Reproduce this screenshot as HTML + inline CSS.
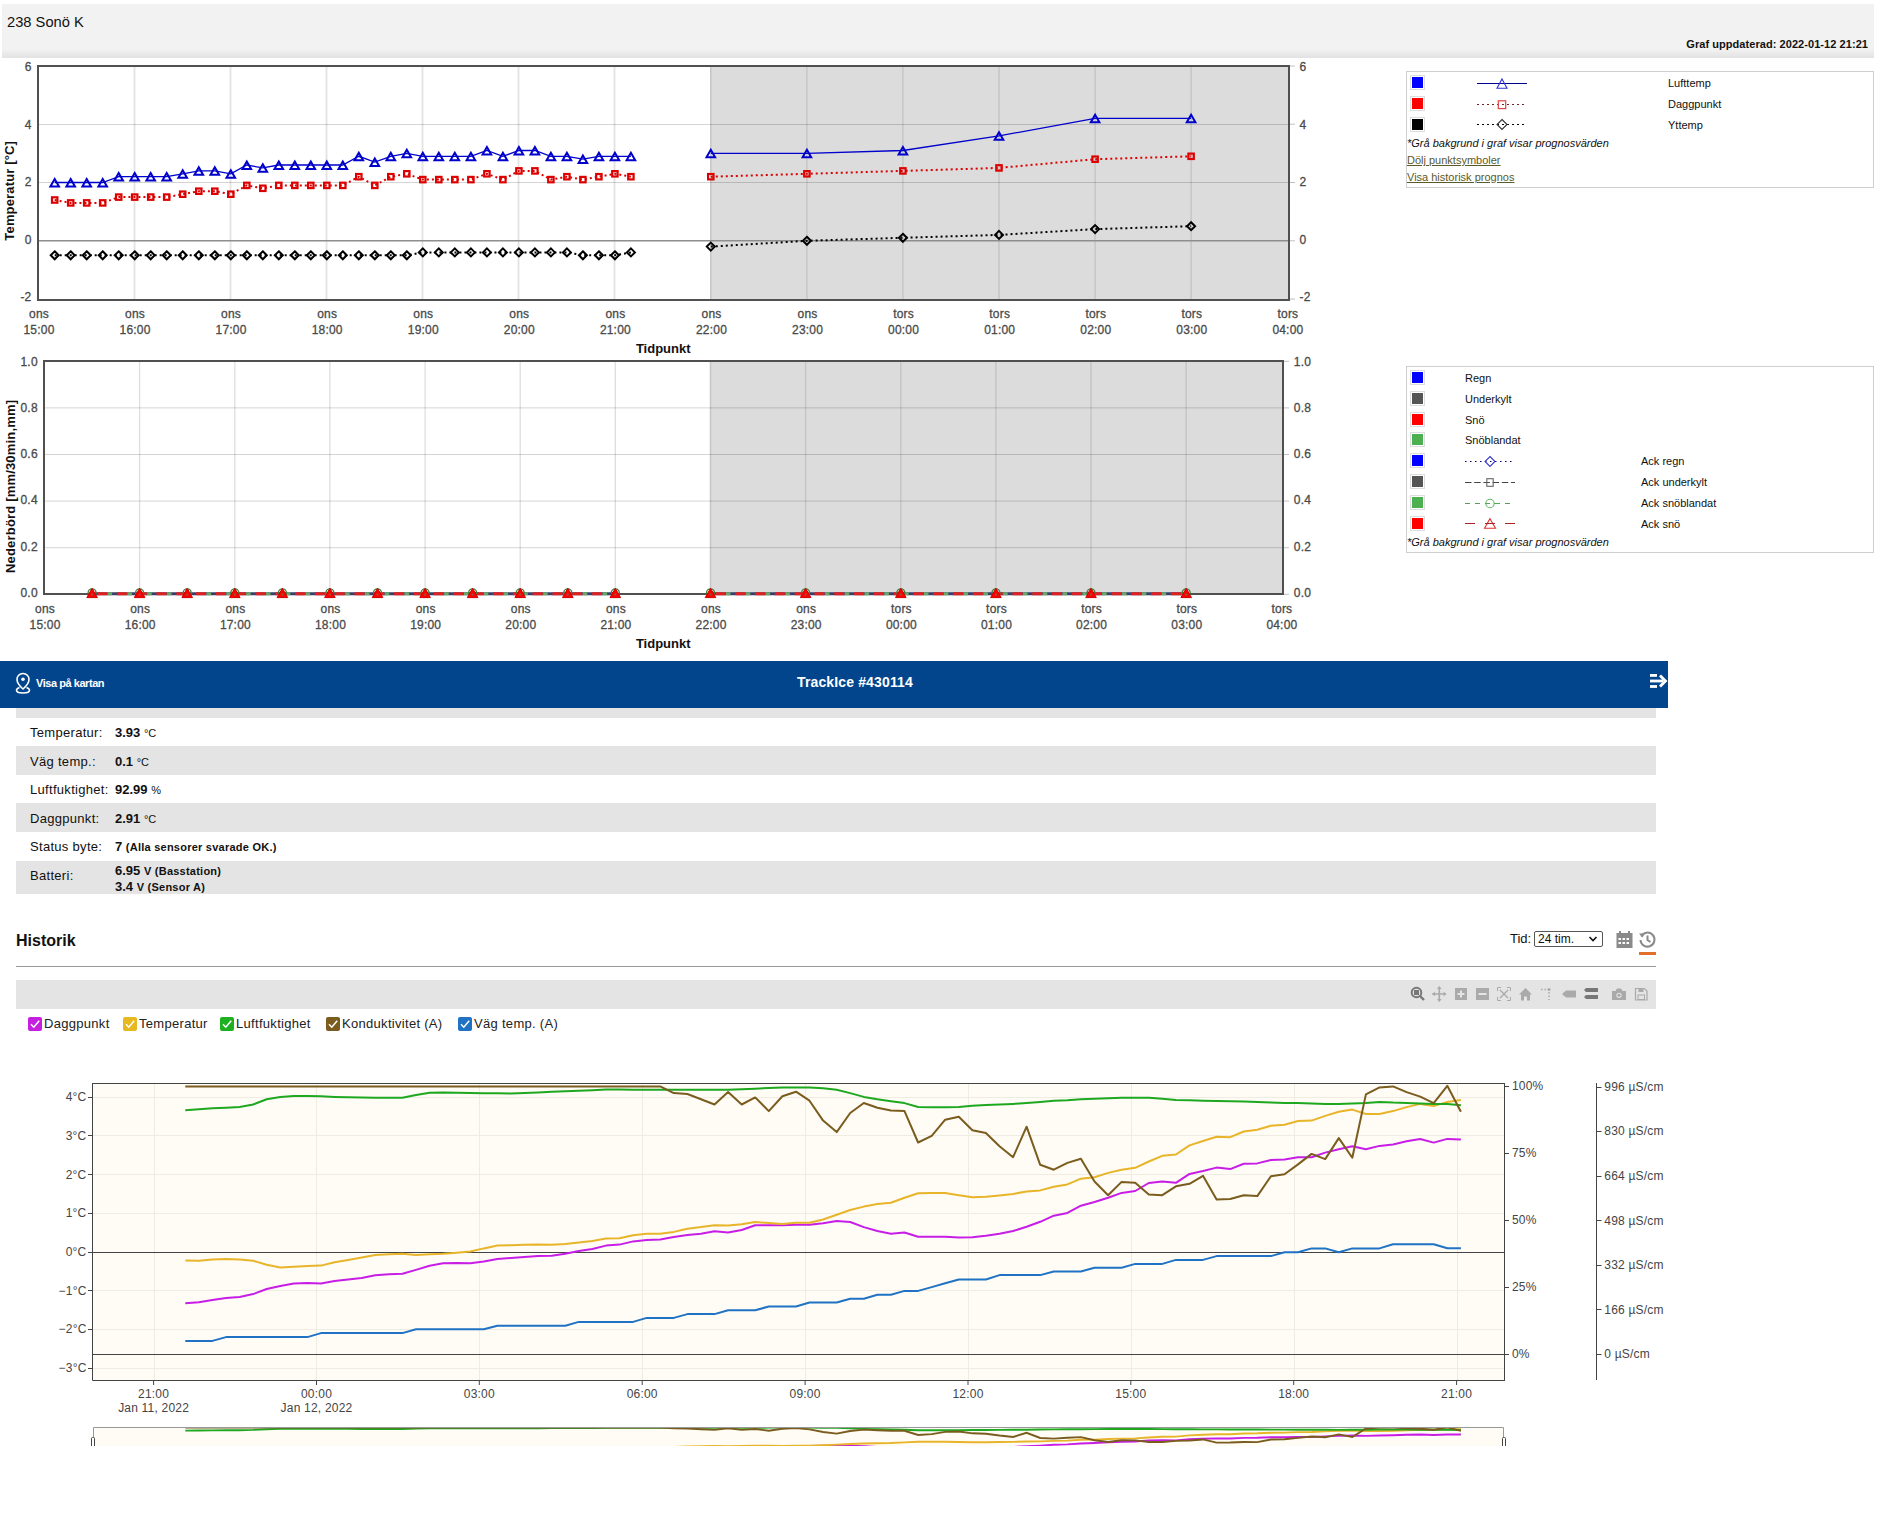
<!DOCTYPE html><html><head><meta charset="utf-8"><title>238 Sonö K</title><style>
*{margin:0;padding:0;box-sizing:border-box}
html,body{width:1882px;height:1525px;overflow:hidden;background:#fff;font-family:"Liberation Sans", sans-serif;}
.abs{position:absolute}
svg text{font-family:"Liberation Sans", sans-serif}
.ax{font-size:12px;fill:#4a4a4a;stroke:#4a4a4a;stroke-width:0.3px;letter-spacing:0.2px}
.ttl{font-size:13px;font-weight:bold;fill:#111}
.pl{font-size:12px;fill:#444;letter-spacing:0.2px}

.lg{font-size:11px;color:#111;white-space:nowrap}
.note{font-size:11px;font-style:italic;color:#111;white-space:nowrap}
.lnk{font-size:11px;color:#5a5a2a;text-decoration:underline;white-space:nowrap}
.row{position:absolute;left:16px;width:1640px}
.gr{background:#e4e4e4}
.lab{position:absolute;left:14px;font-size:13px;color:#111;white-space:nowrap;letter-spacing:0.3px}
.val{position:absolute;left:99px;font-size:13px;font-weight:bold;color:#111;white-space:nowrap}
.unit{font-size:11px;font-weight:normal}
.ub{font-size:11px;font-weight:bold;letter-spacing:0.24px}
.cb{position:absolute;top:1017px;width:14px;height:14px;border-radius:2px}
.cbl{position:absolute;top:1015.5px;font-size:13px;color:#222;white-space:nowrap;letter-spacing:0.3px}
</style></head><body>
<div class="abs" style="left:2px;top:4px;width:1872px;height:54px;background:linear-gradient(to bottom,#f2f2f2 0,#f2f2f2 45px,#e2e2e2 54px)"></div>
<div class="abs" style="left:7px;top:13px;font-size:14.7px;color:#111;line-height:18px;white-space:nowrap">238 Sonö K</div>
<div class="abs" style="right:14px;top:37.8px;font-size:11px;font-weight:bold;color:#111;line-height:13px;letter-spacing:0.06px;white-space:nowrap">Graf uppdaterad: 2022-01-12 21:21</div>
<svg class="abs" style="left:0;top:0" width="1882" height="660" viewBox="0 0 1882 660">
<rect x="710.8" y="66" width="578.2" height="234" fill="#dcdcdc"/>
<rect x="133" y="67" width="1" height="232" fill="#f3f3f3"/>
<rect x="134" y="67" width="1" height="232" fill="#e3e3e3"/>
<rect x="135" y="67" width="1" height="232" fill="#f2f2f2"/>
<rect x="229" y="67" width="1" height="232" fill="#f3f3f3"/>
<rect x="230" y="67" width="1" height="232" fill="#e3e3e3"/>
<rect x="231" y="67" width="1" height="232" fill="#f2f2f2"/>
<rect x="325" y="67" width="1" height="232" fill="#f3f3f3"/>
<rect x="326" y="67" width="1" height="232" fill="#e3e3e3"/>
<rect x="327" y="67" width="1" height="232" fill="#f2f2f2"/>
<rect x="421" y="67" width="1" height="232" fill="#f3f3f3"/>
<rect x="422" y="67" width="1" height="232" fill="#e3e3e3"/>
<rect x="423" y="67" width="1" height="232" fill="#f2f2f2"/>
<rect x="517" y="67" width="1" height="232" fill="#f3f3f3"/>
<rect x="518" y="67" width="1" height="232" fill="#e3e3e3"/>
<rect x="519" y="67" width="1" height="232" fill="#f2f2f2"/>
<rect x="613" y="67" width="1" height="232" fill="#f3f3f3"/>
<rect x="614" y="67" width="1" height="232" fill="#e3e3e3"/>
<rect x="615" y="67" width="1" height="232" fill="#f2f2f2"/>
<line x1="710.8" y1="67" x2="710.8" y2="299" stroke="#c6c6c6" stroke-width="1.5"/>
<line x1="806.9" y1="67" x2="806.9" y2="299" stroke="#c6c6c6" stroke-width="1.5"/>
<line x1="902.9" y1="67" x2="902.9" y2="299" stroke="#c6c6c6" stroke-width="1.5"/>
<line x1="999.0" y1="67" x2="999.0" y2="299" stroke="#c6c6c6" stroke-width="1.5"/>
<line x1="1095.1" y1="67" x2="1095.1" y2="299" stroke="#c6c6c6" stroke-width="1.5"/>
<line x1="1191.1" y1="67" x2="1191.1" y2="299" stroke="#c6c6c6" stroke-width="1.5"/>
<line x1="38" y1="124.50" x2="1289" y2="124.50" stroke="#000" stroke-opacity="0.17" stroke-width="1"/>
<line x1="38" y1="182.50" x2="1289" y2="182.50" stroke="#000" stroke-opacity="0.17" stroke-width="1"/>
<line x1="38" y1="240.75" x2="1289" y2="240.75" stroke="#8e8e8e" stroke-width="1.6"/>
<rect x="38" y="66" width="1251" height="234" fill="none" stroke="#505050" stroke-width="2"/>
<line x1="1290" y1="66.0" x2="1295" y2="66.0" stroke="#c0c0c0" stroke-width="1"/>
<line x1="1290" y1="124.2" x2="1295" y2="124.2" stroke="#c0c0c0" stroke-width="1"/>
<line x1="1290" y1="182.5" x2="1295" y2="182.5" stroke="#c0c0c0" stroke-width="1"/>
<line x1="1290" y1="240.8" x2="1295" y2="240.8" stroke="#c0c0c0" stroke-width="1"/>
<line x1="1290" y1="299.0" x2="1295" y2="299.0" stroke="#c0c0c0" stroke-width="1"/>
<text x="31.5" y="71.0" text-anchor="end" class="ax">6</text>
<text x="1299.5" y="71.0" class="ax">6</text>
<text x="31.5" y="128.6" text-anchor="end" class="ax">4</text>
<text x="1299.5" y="128.6" class="ax">4</text>
<text x="31.5" y="186.2" text-anchor="end" class="ax">2</text>
<text x="1299.5" y="186.2" class="ax">2</text>
<text x="31.5" y="243.8" text-anchor="end" class="ax">0</text>
<text x="1299.5" y="243.8" class="ax">0</text>
<text x="31.5" y="301.4" text-anchor="end" class="ax">-2</text>
<text x="1299.5" y="301.4" class="ax">-2</text>
<text x="39.0" y="317.8" text-anchor="middle" class="ax">ons</text>
<text x="39.0" y="333.8" text-anchor="middle" class="ax">15:00</text>
<text x="135.1" y="317.8" text-anchor="middle" class="ax">ons</text>
<text x="135.1" y="333.8" text-anchor="middle" class="ax">16:00</text>
<text x="231.1" y="317.8" text-anchor="middle" class="ax">ons</text>
<text x="231.1" y="333.8" text-anchor="middle" class="ax">17:00</text>
<text x="327.2" y="317.8" text-anchor="middle" class="ax">ons</text>
<text x="327.2" y="333.8" text-anchor="middle" class="ax">18:00</text>
<text x="423.3" y="317.8" text-anchor="middle" class="ax">ons</text>
<text x="423.3" y="333.8" text-anchor="middle" class="ax">19:00</text>
<text x="519.3" y="317.8" text-anchor="middle" class="ax">ons</text>
<text x="519.3" y="333.8" text-anchor="middle" class="ax">20:00</text>
<text x="615.4" y="317.8" text-anchor="middle" class="ax">ons</text>
<text x="615.4" y="333.8" text-anchor="middle" class="ax">21:00</text>
<text x="711.5" y="317.8" text-anchor="middle" class="ax">ons</text>
<text x="711.5" y="333.8" text-anchor="middle" class="ax">22:00</text>
<text x="807.6" y="317.8" text-anchor="middle" class="ax">ons</text>
<text x="807.6" y="333.8" text-anchor="middle" class="ax">23:00</text>
<text x="903.6" y="317.8" text-anchor="middle" class="ax">tors</text>
<text x="903.6" y="333.8" text-anchor="middle" class="ax">00:00</text>
<text x="999.7" y="317.8" text-anchor="middle" class="ax">tors</text>
<text x="999.7" y="333.8" text-anchor="middle" class="ax">01:00</text>
<text x="1095.8" y="317.8" text-anchor="middle" class="ax">tors</text>
<text x="1095.8" y="333.8" text-anchor="middle" class="ax">02:00</text>
<text x="1191.8" y="317.8" text-anchor="middle" class="ax">tors</text>
<text x="1191.8" y="333.8" text-anchor="middle" class="ax">03:00</text>
<text x="1287.9" y="317.8" text-anchor="middle" class="ax">tors</text>
<text x="1287.9" y="333.8" text-anchor="middle" class="ax">04:00</text>
<text x="663.2" y="352.9" text-anchor="middle" class="ttl">Tidpunkt</text>
<text transform="translate(14.0,190.8) rotate(-90)" text-anchor="middle" class="ttl" style="letter-spacing:0.15px">Temperatur [°C]</text>
<polyline points="54.7,255.3 70.7,255.3 86.7,255.3 102.7,255.3 118.7,255.3 134.7,255.3 150.7,255.3 166.7,255.3 182.7,255.3 198.8,255.3 214.8,255.3 230.8,255.3 246.8,255.3 262.8,255.3 278.8,255.3 294.8,255.3 310.8,255.3 326.8,255.3 342.8,255.3 358.8,255.3 374.8,255.3 390.8,255.3 406.8,255.3 422.8,252.4 438.8,252.4 454.8,252.4 470.9,252.4 486.9,252.4 502.9,252.4 518.9,252.4 534.9,252.4 550.9,252.4 566.9,252.4 582.9,255.3 598.9,255.3 614.9,255.3 630.9,252.4" fill="none" stroke="#000" stroke-width="2" stroke-dasharray="2,3"/>
<polyline points="54.7,200.0 70.7,202.9 86.7,202.9 102.7,202.9 118.7,197.1 134.7,197.1 150.7,197.1 166.7,197.1 182.7,194.2 198.8,191.2 214.8,191.2 230.8,194.2 246.8,185.4 262.8,188.3 278.8,185.4 294.8,185.4 310.8,185.4 326.8,185.4 342.8,185.4 358.8,176.7 374.8,185.4 390.8,176.7 406.8,173.8 422.8,179.6 438.8,179.6 454.8,179.6 470.9,179.6 486.9,173.8 502.9,179.6 518.9,170.9 534.9,170.9 550.9,179.6 566.9,176.7 582.9,179.6 598.9,176.7 614.9,173.8 630.9,176.7" fill="none" stroke="#dd0000" stroke-width="2" stroke-dasharray="2,3"/>
<polyline points="54.7,182.5 70.7,182.5 86.7,182.5 102.7,182.5 118.7,176.7 134.7,176.7 150.7,176.7 166.7,176.7 182.7,173.8 198.8,170.9 214.8,170.9 230.8,173.8 246.8,165.0 262.8,167.9 278.8,165.0 294.8,165.0 310.8,165.0 326.8,165.0 342.8,165.0 358.8,156.3 374.8,162.1 390.8,156.3 406.8,153.4 422.8,156.3 438.8,156.3 454.8,156.3 470.9,156.3 486.9,150.5 502.9,156.3 518.9,150.5 534.9,150.5 550.9,156.3 566.9,156.3 582.9,159.2 598.9,156.3 614.9,156.3 630.9,156.3" fill="none" stroke="#0000cc" stroke-width="1.3"/>
<path d="M54.7,251.3L58.7,255.3L54.7,259.3L50.7,255.3Z" fill="none" stroke="#000" stroke-width="2"/>
<path d="M70.7,251.3L74.7,255.3L70.7,259.3L66.7,255.3Z" fill="none" stroke="#000" stroke-width="2"/>
<path d="M86.7,251.3L90.7,255.3L86.7,259.3L82.7,255.3Z" fill="none" stroke="#000" stroke-width="2"/>
<path d="M102.7,251.3L106.7,255.3L102.7,259.3L98.7,255.3Z" fill="none" stroke="#000" stroke-width="2"/>
<path d="M118.7,251.3L122.7,255.3L118.7,259.3L114.7,255.3Z" fill="none" stroke="#000" stroke-width="2"/>
<path d="M134.7,251.3L138.7,255.3L134.7,259.3L130.7,255.3Z" fill="none" stroke="#000" stroke-width="2"/>
<path d="M150.7,251.3L154.7,255.3L150.7,259.3L146.7,255.3Z" fill="none" stroke="#000" stroke-width="2"/>
<path d="M166.7,251.3L170.7,255.3L166.7,259.3L162.7,255.3Z" fill="none" stroke="#000" stroke-width="2"/>
<path d="M182.7,251.3L186.7,255.3L182.7,259.3L178.7,255.3Z" fill="none" stroke="#000" stroke-width="2"/>
<path d="M198.8,251.3L202.8,255.3L198.8,259.3L194.8,255.3Z" fill="none" stroke="#000" stroke-width="2"/>
<path d="M214.8,251.3L218.8,255.3L214.8,259.3L210.8,255.3Z" fill="none" stroke="#000" stroke-width="2"/>
<path d="M230.8,251.3L234.8,255.3L230.8,259.3L226.8,255.3Z" fill="none" stroke="#000" stroke-width="2"/>
<path d="M246.8,251.3L250.8,255.3L246.8,259.3L242.8,255.3Z" fill="none" stroke="#000" stroke-width="2"/>
<path d="M262.8,251.3L266.8,255.3L262.8,259.3L258.8,255.3Z" fill="none" stroke="#000" stroke-width="2"/>
<path d="M278.8,251.3L282.8,255.3L278.8,259.3L274.8,255.3Z" fill="none" stroke="#000" stroke-width="2"/>
<path d="M294.8,251.3L298.8,255.3L294.8,259.3L290.8,255.3Z" fill="none" stroke="#000" stroke-width="2"/>
<path d="M310.8,251.3L314.8,255.3L310.8,259.3L306.8,255.3Z" fill="none" stroke="#000" stroke-width="2"/>
<path d="M326.8,251.3L330.8,255.3L326.8,259.3L322.8,255.3Z" fill="none" stroke="#000" stroke-width="2"/>
<path d="M342.8,251.3L346.8,255.3L342.8,259.3L338.8,255.3Z" fill="none" stroke="#000" stroke-width="2"/>
<path d="M358.8,251.3L362.8,255.3L358.8,259.3L354.8,255.3Z" fill="none" stroke="#000" stroke-width="2"/>
<path d="M374.8,251.3L378.8,255.3L374.8,259.3L370.8,255.3Z" fill="none" stroke="#000" stroke-width="2"/>
<path d="M390.8,251.3L394.8,255.3L390.8,259.3L386.8,255.3Z" fill="none" stroke="#000" stroke-width="2"/>
<path d="M406.8,251.3L410.8,255.3L406.8,259.3L402.8,255.3Z" fill="none" stroke="#000" stroke-width="2"/>
<path d="M422.8,248.4L426.8,252.4L422.8,256.4L418.8,252.4Z" fill="none" stroke="#000" stroke-width="2"/>
<path d="M438.8,248.4L442.8,252.4L438.8,256.4L434.8,252.4Z" fill="none" stroke="#000" stroke-width="2"/>
<path d="M454.8,248.4L458.8,252.4L454.8,256.4L450.8,252.4Z" fill="none" stroke="#000" stroke-width="2"/>
<path d="M470.9,248.4L474.9,252.4L470.9,256.4L466.9,252.4Z" fill="none" stroke="#000" stroke-width="2"/>
<path d="M486.9,248.4L490.9,252.4L486.9,256.4L482.9,252.4Z" fill="none" stroke="#000" stroke-width="2"/>
<path d="M502.9,248.4L506.9,252.4L502.9,256.4L498.9,252.4Z" fill="none" stroke="#000" stroke-width="2"/>
<path d="M518.9,248.4L522.9,252.4L518.9,256.4L514.9,252.4Z" fill="none" stroke="#000" stroke-width="2"/>
<path d="M534.9,248.4L538.9,252.4L534.9,256.4L530.9,252.4Z" fill="none" stroke="#000" stroke-width="2"/>
<path d="M550.9,248.4L554.9,252.4L550.9,256.4L546.9,252.4Z" fill="none" stroke="#000" stroke-width="2"/>
<path d="M566.9,248.4L570.9,252.4L566.9,256.4L562.9,252.4Z" fill="none" stroke="#000" stroke-width="2"/>
<path d="M582.9,251.3L586.9,255.3L582.9,259.3L578.9,255.3Z" fill="none" stroke="#000" stroke-width="2"/>
<path d="M598.9,251.3L602.9,255.3L598.9,259.3L594.9,255.3Z" fill="none" stroke="#000" stroke-width="2"/>
<path d="M614.9,251.3L618.9,255.3L614.9,259.3L610.9,255.3Z" fill="none" stroke="#000" stroke-width="2"/>
<path d="M630.9,248.4L634.9,252.4L630.9,256.4L626.9,252.4Z" fill="none" stroke="#000" stroke-width="2"/>
<rect x="52.0" y="197.3" width="5.4" height="5.4" fill="none" stroke="#dd0000" stroke-width="2.2"/>
<rect x="68.0" y="200.2" width="5.4" height="5.4" fill="none" stroke="#dd0000" stroke-width="2.2"/>
<rect x="84.0" y="200.2" width="5.4" height="5.4" fill="none" stroke="#dd0000" stroke-width="2.2"/>
<rect x="100.0" y="200.2" width="5.4" height="5.4" fill="none" stroke="#dd0000" stroke-width="2.2"/>
<rect x="116.0" y="194.4" width="5.4" height="5.4" fill="none" stroke="#dd0000" stroke-width="2.2"/>
<rect x="132.0" y="194.4" width="5.4" height="5.4" fill="none" stroke="#dd0000" stroke-width="2.2"/>
<rect x="148.0" y="194.4" width="5.4" height="5.4" fill="none" stroke="#dd0000" stroke-width="2.2"/>
<rect x="164.0" y="194.4" width="5.4" height="5.4" fill="none" stroke="#dd0000" stroke-width="2.2"/>
<rect x="180.0" y="191.5" width="5.4" height="5.4" fill="none" stroke="#dd0000" stroke-width="2.2"/>
<rect x="196.1" y="188.5" width="5.4" height="5.4" fill="none" stroke="#dd0000" stroke-width="2.2"/>
<rect x="212.1" y="188.5" width="5.4" height="5.4" fill="none" stroke="#dd0000" stroke-width="2.2"/>
<rect x="228.1" y="191.5" width="5.4" height="5.4" fill="none" stroke="#dd0000" stroke-width="2.2"/>
<rect x="244.1" y="182.7" width="5.4" height="5.4" fill="none" stroke="#dd0000" stroke-width="2.2"/>
<rect x="260.1" y="185.6" width="5.4" height="5.4" fill="none" stroke="#dd0000" stroke-width="2.2"/>
<rect x="276.1" y="182.7" width="5.4" height="5.4" fill="none" stroke="#dd0000" stroke-width="2.2"/>
<rect x="292.1" y="182.7" width="5.4" height="5.4" fill="none" stroke="#dd0000" stroke-width="2.2"/>
<rect x="308.1" y="182.7" width="5.4" height="5.4" fill="none" stroke="#dd0000" stroke-width="2.2"/>
<rect x="324.1" y="182.7" width="5.4" height="5.4" fill="none" stroke="#dd0000" stroke-width="2.2"/>
<rect x="340.1" y="182.7" width="5.4" height="5.4" fill="none" stroke="#dd0000" stroke-width="2.2"/>
<rect x="356.1" y="174.0" width="5.4" height="5.4" fill="none" stroke="#dd0000" stroke-width="2.2"/>
<rect x="372.1" y="182.7" width="5.4" height="5.4" fill="none" stroke="#dd0000" stroke-width="2.2"/>
<rect x="388.1" y="174.0" width="5.4" height="5.4" fill="none" stroke="#dd0000" stroke-width="2.2"/>
<rect x="404.1" y="171.1" width="5.4" height="5.4" fill="none" stroke="#dd0000" stroke-width="2.2"/>
<rect x="420.1" y="176.9" width="5.4" height="5.4" fill="none" stroke="#dd0000" stroke-width="2.2"/>
<rect x="436.1" y="176.9" width="5.4" height="5.4" fill="none" stroke="#dd0000" stroke-width="2.2"/>
<rect x="452.1" y="176.9" width="5.4" height="5.4" fill="none" stroke="#dd0000" stroke-width="2.2"/>
<rect x="468.2" y="176.9" width="5.4" height="5.4" fill="none" stroke="#dd0000" stroke-width="2.2"/>
<rect x="484.2" y="171.1" width="5.4" height="5.4" fill="none" stroke="#dd0000" stroke-width="2.2"/>
<rect x="500.2" y="176.9" width="5.4" height="5.4" fill="none" stroke="#dd0000" stroke-width="2.2"/>
<rect x="516.2" y="168.2" width="5.4" height="5.4" fill="none" stroke="#dd0000" stroke-width="2.2"/>
<rect x="532.2" y="168.2" width="5.4" height="5.4" fill="none" stroke="#dd0000" stroke-width="2.2"/>
<rect x="548.2" y="176.9" width="5.4" height="5.4" fill="none" stroke="#dd0000" stroke-width="2.2"/>
<rect x="564.2" y="174.0" width="5.4" height="5.4" fill="none" stroke="#dd0000" stroke-width="2.2"/>
<rect x="580.2" y="176.9" width="5.4" height="5.4" fill="none" stroke="#dd0000" stroke-width="2.2"/>
<rect x="596.2" y="174.0" width="5.4" height="5.4" fill="none" stroke="#dd0000" stroke-width="2.2"/>
<rect x="612.2" y="171.1" width="5.4" height="5.4" fill="none" stroke="#dd0000" stroke-width="2.2"/>
<rect x="628.2" y="174.0" width="5.4" height="5.4" fill="none" stroke="#dd0000" stroke-width="2.2"/>
<path d="M54.7,178.9L59.0,186.4L50.4,186.4Z" fill="none" stroke="#0000cc" stroke-width="2"/>
<path d="M70.7,178.9L75.0,186.4L66.4,186.4Z" fill="none" stroke="#0000cc" stroke-width="2"/>
<path d="M86.7,178.9L91.0,186.4L82.4,186.4Z" fill="none" stroke="#0000cc" stroke-width="2"/>
<path d="M102.7,178.9L107.0,186.4L98.4,186.4Z" fill="none" stroke="#0000cc" stroke-width="2"/>
<path d="M118.7,173.1L123.0,180.6L114.4,180.6Z" fill="none" stroke="#0000cc" stroke-width="2"/>
<path d="M134.7,173.1L139.0,180.6L130.4,180.6Z" fill="none" stroke="#0000cc" stroke-width="2"/>
<path d="M150.7,173.1L155.0,180.6L146.4,180.6Z" fill="none" stroke="#0000cc" stroke-width="2"/>
<path d="M166.7,173.1L171.0,180.6L162.4,180.6Z" fill="none" stroke="#0000cc" stroke-width="2"/>
<path d="M182.7,170.2L187.0,177.7L178.4,177.7Z" fill="none" stroke="#0000cc" stroke-width="2"/>
<path d="M198.8,167.3L203.1,174.8L194.5,174.8Z" fill="none" stroke="#0000cc" stroke-width="2"/>
<path d="M214.8,167.3L219.1,174.8L210.5,174.8Z" fill="none" stroke="#0000cc" stroke-width="2"/>
<path d="M230.8,170.2L235.1,177.7L226.5,177.7Z" fill="none" stroke="#0000cc" stroke-width="2"/>
<path d="M246.8,161.4L251.1,168.9L242.5,168.9Z" fill="none" stroke="#0000cc" stroke-width="2"/>
<path d="M262.8,164.3L267.1,171.8L258.5,171.8Z" fill="none" stroke="#0000cc" stroke-width="2"/>
<path d="M278.8,161.4L283.1,168.9L274.5,168.9Z" fill="none" stroke="#0000cc" stroke-width="2"/>
<path d="M294.8,161.4L299.1,168.9L290.5,168.9Z" fill="none" stroke="#0000cc" stroke-width="2"/>
<path d="M310.8,161.4L315.1,168.9L306.5,168.9Z" fill="none" stroke="#0000cc" stroke-width="2"/>
<path d="M326.8,161.4L331.1,168.9L322.5,168.9Z" fill="none" stroke="#0000cc" stroke-width="2"/>
<path d="M342.8,161.4L347.1,168.9L338.5,168.9Z" fill="none" stroke="#0000cc" stroke-width="2"/>
<path d="M358.8,152.7L363.1,160.2L354.5,160.2Z" fill="none" stroke="#0000cc" stroke-width="2"/>
<path d="M374.8,158.5L379.1,166.0L370.5,166.0Z" fill="none" stroke="#0000cc" stroke-width="2"/>
<path d="M390.8,152.7L395.1,160.2L386.5,160.2Z" fill="none" stroke="#0000cc" stroke-width="2"/>
<path d="M406.8,149.8L411.1,157.3L402.5,157.3Z" fill="none" stroke="#0000cc" stroke-width="2"/>
<path d="M422.8,152.7L427.1,160.2L418.5,160.2Z" fill="none" stroke="#0000cc" stroke-width="2"/>
<path d="M438.8,152.7L443.1,160.2L434.5,160.2Z" fill="none" stroke="#0000cc" stroke-width="2"/>
<path d="M454.8,152.7L459.1,160.2L450.5,160.2Z" fill="none" stroke="#0000cc" stroke-width="2"/>
<path d="M470.9,152.7L475.2,160.2L466.6,160.2Z" fill="none" stroke="#0000cc" stroke-width="2"/>
<path d="M486.9,146.9L491.2,154.4L482.6,154.4Z" fill="none" stroke="#0000cc" stroke-width="2"/>
<path d="M502.9,152.7L507.2,160.2L498.6,160.2Z" fill="none" stroke="#0000cc" stroke-width="2"/>
<path d="M518.9,146.9L523.2,154.4L514.6,154.4Z" fill="none" stroke="#0000cc" stroke-width="2"/>
<path d="M534.9,146.9L539.2,154.4L530.6,154.4Z" fill="none" stroke="#0000cc" stroke-width="2"/>
<path d="M550.9,152.7L555.2,160.2L546.6,160.2Z" fill="none" stroke="#0000cc" stroke-width="2"/>
<path d="M566.9,152.7L571.2,160.2L562.6,160.2Z" fill="none" stroke="#0000cc" stroke-width="2"/>
<path d="M582.9,155.6L587.2,163.1L578.6,163.1Z" fill="none" stroke="#0000cc" stroke-width="2"/>
<path d="M598.9,152.7L603.2,160.2L594.6,160.2Z" fill="none" stroke="#0000cc" stroke-width="2"/>
<path d="M614.9,152.7L619.2,160.2L610.6,160.2Z" fill="none" stroke="#0000cc" stroke-width="2"/>
<path d="M630.9,152.7L635.2,160.2L626.6,160.2Z" fill="none" stroke="#0000cc" stroke-width="2"/>
<polyline points="710.8,246.6 806.9,240.8 902.9,237.8 999.0,234.9 1095.1,229.1 1191.1,226.2" fill="none" stroke="#000" stroke-width="2" stroke-dasharray="2,3"/>
<polyline points="710.8,176.7 806.9,173.8 902.9,170.9 999.0,167.9 1095.1,159.2 1191.1,156.3" fill="none" stroke="#dd0000" stroke-width="2" stroke-dasharray="2,3"/>
<polyline points="710.8,153.4 806.9,153.4 902.9,150.5 999.0,135.9 1095.1,118.4 1191.1,118.4" fill="none" stroke="#0000cc" stroke-width="1.3"/>
<path d="M710.8,242.6L714.8,246.6L710.8,250.6L706.8,246.6Z" fill="none" stroke="#000" stroke-width="2"/>
<path d="M806.9,236.8L810.9,240.8L806.9,244.8L802.9,240.8Z" fill="none" stroke="#000" stroke-width="2"/>
<path d="M902.9,233.8L906.9,237.8L902.9,241.8L898.9,237.8Z" fill="none" stroke="#000" stroke-width="2"/>
<path d="M999.0,230.9L1003.0,234.9L999.0,238.9L995.0,234.9Z" fill="none" stroke="#000" stroke-width="2"/>
<path d="M1095.1,225.1L1099.1,229.1L1095.1,233.1L1091.1,229.1Z" fill="none" stroke="#000" stroke-width="2"/>
<path d="M1191.1,222.2L1195.1,226.2L1191.1,230.2L1187.1,226.2Z" fill="none" stroke="#000" stroke-width="2"/>
<rect x="708.1" y="174.0" width="5.4" height="5.4" fill="none" stroke="#dd0000" stroke-width="2.2"/>
<rect x="804.2" y="171.1" width="5.4" height="5.4" fill="none" stroke="#dd0000" stroke-width="2.2"/>
<rect x="900.2" y="168.2" width="5.4" height="5.4" fill="none" stroke="#dd0000" stroke-width="2.2"/>
<rect x="996.3" y="165.2" width="5.4" height="5.4" fill="none" stroke="#dd0000" stroke-width="2.2"/>
<rect x="1092.4" y="156.5" width="5.4" height="5.4" fill="none" stroke="#dd0000" stroke-width="2.2"/>
<rect x="1188.4" y="153.6" width="5.4" height="5.4" fill="none" stroke="#dd0000" stroke-width="2.2"/>
<path d="M710.8,149.8L715.1,157.3L706.5,157.3Z" fill="none" stroke="#0000cc" stroke-width="2"/>
<path d="M806.9,149.8L811.2,157.3L802.6,157.3Z" fill="none" stroke="#0000cc" stroke-width="2"/>
<path d="M902.9,146.9L907.2,154.4L898.6,154.4Z" fill="none" stroke="#0000cc" stroke-width="2"/>
<path d="M999.0,132.3L1003.3,139.8L994.7,139.8Z" fill="none" stroke="#0000cc" stroke-width="2"/>
<path d="M1095.1,114.8L1099.4,122.3L1090.8,122.3Z" fill="none" stroke="#0000cc" stroke-width="2"/>
<path d="M1191.1,114.8L1195.4,122.3L1186.8,122.3Z" fill="none" stroke="#0000cc" stroke-width="2"/>
<rect x="710.5" y="361" width="572.5" height="233" fill="#dcdcdc"/>
<line x1="139.6" y1="362" x2="139.6" y2="593" stroke="#dedede" stroke-width="1.3"/>
<line x1="234.8" y1="362" x2="234.8" y2="593" stroke="#dedede" stroke-width="1.3"/>
<line x1="329.9" y1="362" x2="329.9" y2="593" stroke="#dedede" stroke-width="1.3"/>
<line x1="425.1" y1="362" x2="425.1" y2="593" stroke="#dedede" stroke-width="1.3"/>
<line x1="520.2" y1="362" x2="520.2" y2="593" stroke="#dedede" stroke-width="1.3"/>
<line x1="615.3" y1="362" x2="615.3" y2="593" stroke="#dedede" stroke-width="1.3"/>
<line x1="710.5" y1="362" x2="710.5" y2="593" stroke="#c6c6c6" stroke-width="1.5"/>
<line x1="805.6" y1="362" x2="805.6" y2="593" stroke="#c6c6c6" stroke-width="1.5"/>
<line x1="900.8" y1="362" x2="900.8" y2="593" stroke="#c6c6c6" stroke-width="1.5"/>
<line x1="995.9" y1="362" x2="995.9" y2="593" stroke="#c6c6c6" stroke-width="1.5"/>
<line x1="1091.0" y1="362" x2="1091.0" y2="593" stroke="#c6c6c6" stroke-width="1.5"/>
<line x1="1186.2" y1="362" x2="1186.2" y2="593" stroke="#c6c6c6" stroke-width="1.5"/>
<line x1="44" y1="547.70" x2="1283" y2="547.70" stroke="#000" stroke-opacity="0.17" stroke-width="1"/>
<line x1="44" y1="501.10" x2="1283" y2="501.10" stroke="#000" stroke-opacity="0.17" stroke-width="1"/>
<line x1="44" y1="454.50" x2="1283" y2="454.50" stroke="#000" stroke-opacity="0.17" stroke-width="1"/>
<line x1="44" y1="407.90" x2="1283" y2="407.90" stroke="#000" stroke-opacity="0.17" stroke-width="1"/>
<rect x="44" y="361" width="1239" height="233" fill="none" stroke="#505050" stroke-width="2"/>
<line x1="1284" y1="361.3" x2="1289" y2="361.3" stroke="#c0c0c0" stroke-width="1"/>
<text x="37.8" y="365.8" text-anchor="end" class="ax">1.0</text>
<text x="1293.8" y="365.8" class="ax">1.0</text>
<line x1="1284" y1="407.9" x2="1289" y2="407.9" stroke="#c0c0c0" stroke-width="1"/>
<text x="37.8" y="412.0" text-anchor="end" class="ax">0.8</text>
<text x="1293.8" y="412.0" class="ax">0.8</text>
<line x1="1284" y1="454.5" x2="1289" y2="454.5" stroke="#c0c0c0" stroke-width="1"/>
<text x="37.8" y="458.2" text-anchor="end" class="ax">0.6</text>
<text x="1293.8" y="458.2" class="ax">0.6</text>
<line x1="1284" y1="501.1" x2="1289" y2="501.1" stroke="#c0c0c0" stroke-width="1"/>
<text x="37.8" y="504.4" text-anchor="end" class="ax">0.4</text>
<text x="1293.8" y="504.4" class="ax">0.4</text>
<line x1="1284" y1="547.7" x2="1289" y2="547.7" stroke="#c0c0c0" stroke-width="1"/>
<text x="37.8" y="550.6" text-anchor="end" class="ax">0.2</text>
<text x="1293.8" y="550.6" class="ax">0.2</text>
<line x1="1284" y1="594.3" x2="1289" y2="594.3" stroke="#c0c0c0" stroke-width="1"/>
<text x="37.8" y="596.8" text-anchor="end" class="ax">0.0</text>
<text x="1293.8" y="596.8" class="ax">0.0</text>
<text x="45.1" y="612.8" text-anchor="middle" class="ax">ons</text>
<text x="45.1" y="628.7" text-anchor="middle" class="ax">15:00</text>
<text x="140.2" y="612.8" text-anchor="middle" class="ax">ons</text>
<text x="140.2" y="628.7" text-anchor="middle" class="ax">16:00</text>
<text x="235.4" y="612.8" text-anchor="middle" class="ax">ons</text>
<text x="235.4" y="628.7" text-anchor="middle" class="ax">17:00</text>
<text x="330.5" y="612.8" text-anchor="middle" class="ax">ons</text>
<text x="330.5" y="628.7" text-anchor="middle" class="ax">18:00</text>
<text x="425.7" y="612.8" text-anchor="middle" class="ax">ons</text>
<text x="425.7" y="628.7" text-anchor="middle" class="ax">19:00</text>
<text x="520.8" y="612.8" text-anchor="middle" class="ax">ons</text>
<text x="520.8" y="628.7" text-anchor="middle" class="ax">20:00</text>
<text x="615.9" y="612.8" text-anchor="middle" class="ax">ons</text>
<text x="615.9" y="628.7" text-anchor="middle" class="ax">21:00</text>
<text x="711.1" y="612.8" text-anchor="middle" class="ax">ons</text>
<text x="711.1" y="628.7" text-anchor="middle" class="ax">22:00</text>
<text x="806.2" y="612.8" text-anchor="middle" class="ax">ons</text>
<text x="806.2" y="628.7" text-anchor="middle" class="ax">23:00</text>
<text x="901.4" y="612.8" text-anchor="middle" class="ax">tors</text>
<text x="901.4" y="628.7" text-anchor="middle" class="ax">00:00</text>
<text x="996.5" y="612.8" text-anchor="middle" class="ax">tors</text>
<text x="996.5" y="628.7" text-anchor="middle" class="ax">01:00</text>
<text x="1091.6" y="612.8" text-anchor="middle" class="ax">tors</text>
<text x="1091.6" y="628.7" text-anchor="middle" class="ax">02:00</text>
<text x="1186.8" y="612.8" text-anchor="middle" class="ax">tors</text>
<text x="1186.8" y="628.7" text-anchor="middle" class="ax">03:00</text>
<text x="1281.9" y="612.8" text-anchor="middle" class="ax">tors</text>
<text x="1281.9" y="628.7" text-anchor="middle" class="ax">04:00</text>
<text x="663.2" y="647.7" text-anchor="middle" class="ttl">Tidpunkt</text>
<text transform="translate(14.6,486.4) rotate(-90)" text-anchor="middle" class="ttl" style="letter-spacing:0.18px">Nederbörd [mm/30min,mm]</text>
<line x1="92.1" y1="593.8" x2="615.3" y2="593.8" stroke="#3a3f6a" stroke-width="3"/>
<line x1="97.1" y1="593.8" x2="615.3" y2="593.8" stroke="#e02020" stroke-width="3" stroke-dasharray="10,9.8"/>
<line x1="97.1" y1="593.8" x2="615.3" y2="593.8" stroke="#6aa86a" stroke-width="3" stroke-dasharray="4.5,15.3" stroke-dashoffset="-10.5"/>
<line x1="710.5" y1="593.8" x2="1186.2" y2="593.8" stroke="#3a3f6a" stroke-width="3"/>
<line x1="715.5" y1="593.8" x2="1186.2" y2="593.8" stroke="#e02020" stroke-width="3" stroke-dasharray="10,9.8"/>
<line x1="715.5" y1="593.8" x2="1186.2" y2="593.8" stroke="#6aa86a" stroke-width="3" stroke-dasharray="4.5,15.3" stroke-dashoffset="-10.5"/>
<circle cx="92.1" cy="592.8" r="4" fill="none" stroke="#3f7f3f" stroke-width="1.3"/>
<path d="M92.1,588.3L97.4,597.6L86.8,597.6Z" fill="#ff0000" stroke="#d00000" stroke-width="1"/>
<circle cx="92.1" cy="594.6" r="1.1" fill="#8a5a3a"/>
<circle cx="139.6" cy="592.8" r="4" fill="none" stroke="#3f7f3f" stroke-width="1.3"/>
<path d="M139.6,588.3L144.9,597.6L134.3,597.6Z" fill="#ff0000" stroke="#d00000" stroke-width="1"/>
<circle cx="139.6" cy="594.6" r="1.1" fill="#8a5a3a"/>
<circle cx="187.2" cy="592.8" r="4" fill="none" stroke="#3f7f3f" stroke-width="1.3"/>
<path d="M187.2,588.3L192.5,597.6L181.9,597.6Z" fill="#ff0000" stroke="#d00000" stroke-width="1"/>
<circle cx="187.2" cy="594.6" r="1.1" fill="#8a5a3a"/>
<circle cx="234.8" cy="592.8" r="4" fill="none" stroke="#3f7f3f" stroke-width="1.3"/>
<path d="M234.8,588.3L240.1,597.6L229.5,597.6Z" fill="#ff0000" stroke="#d00000" stroke-width="1"/>
<circle cx="234.8" cy="594.6" r="1.1" fill="#8a5a3a"/>
<circle cx="282.4" cy="592.8" r="4" fill="none" stroke="#3f7f3f" stroke-width="1.3"/>
<path d="M282.4,588.3L287.7,597.6L277.1,597.6Z" fill="#ff0000" stroke="#d00000" stroke-width="1"/>
<circle cx="282.4" cy="594.6" r="1.1" fill="#8a5a3a"/>
<circle cx="329.9" cy="592.8" r="4" fill="none" stroke="#3f7f3f" stroke-width="1.3"/>
<path d="M329.9,588.3L335.2,597.6L324.6,597.6Z" fill="#ff0000" stroke="#d00000" stroke-width="1"/>
<circle cx="329.9" cy="594.6" r="1.1" fill="#8a5a3a"/>
<circle cx="377.5" cy="592.8" r="4" fill="none" stroke="#3f7f3f" stroke-width="1.3"/>
<path d="M377.5,588.3L382.8,597.6L372.2,597.6Z" fill="#ff0000" stroke="#d00000" stroke-width="1"/>
<circle cx="377.5" cy="594.6" r="1.1" fill="#8a5a3a"/>
<circle cx="425.1" cy="592.8" r="4" fill="none" stroke="#3f7f3f" stroke-width="1.3"/>
<path d="M425.1,588.3L430.4,597.6L419.8,597.6Z" fill="#ff0000" stroke="#d00000" stroke-width="1"/>
<circle cx="425.1" cy="594.6" r="1.1" fill="#8a5a3a"/>
<circle cx="472.6" cy="592.8" r="4" fill="none" stroke="#3f7f3f" stroke-width="1.3"/>
<path d="M472.6,588.3L477.9,597.6L467.3,597.6Z" fill="#ff0000" stroke="#d00000" stroke-width="1"/>
<circle cx="472.6" cy="594.6" r="1.1" fill="#8a5a3a"/>
<circle cx="520.2" cy="592.8" r="4" fill="none" stroke="#3f7f3f" stroke-width="1.3"/>
<path d="M520.2,588.3L525.5,597.6L514.9,597.6Z" fill="#ff0000" stroke="#d00000" stroke-width="1"/>
<circle cx="520.2" cy="594.6" r="1.1" fill="#8a5a3a"/>
<circle cx="567.8" cy="592.8" r="4" fill="none" stroke="#3f7f3f" stroke-width="1.3"/>
<path d="M567.8,588.3L573.1,597.6L562.5,597.6Z" fill="#ff0000" stroke="#d00000" stroke-width="1"/>
<circle cx="567.8" cy="594.6" r="1.1" fill="#8a5a3a"/>
<circle cx="615.3" cy="592.8" r="4" fill="none" stroke="#3f7f3f" stroke-width="1.3"/>
<path d="M615.3,588.3L620.6,597.6L610.0,597.6Z" fill="#ff0000" stroke="#d00000" stroke-width="1"/>
<circle cx="615.3" cy="594.6" r="1.1" fill="#8a5a3a"/>
<circle cx="710.5" cy="592.8" r="4" fill="none" stroke="#3f7f3f" stroke-width="1.3"/>
<path d="M710.5,588.3L715.8,597.6L705.2,597.6Z" fill="#ff0000" stroke="#d00000" stroke-width="1"/>
<circle cx="710.5" cy="594.6" r="1.1" fill="#8a5a3a"/>
<circle cx="805.6" cy="592.8" r="4" fill="none" stroke="#3f7f3f" stroke-width="1.3"/>
<path d="M805.6,588.3L810.9,597.6L800.3,597.6Z" fill="#ff0000" stroke="#d00000" stroke-width="1"/>
<circle cx="805.6" cy="594.6" r="1.1" fill="#8a5a3a"/>
<circle cx="900.8" cy="592.8" r="4" fill="none" stroke="#3f7f3f" stroke-width="1.3"/>
<path d="M900.8,588.3L906.1,597.6L895.5,597.6Z" fill="#ff0000" stroke="#d00000" stroke-width="1"/>
<circle cx="900.8" cy="594.6" r="1.1" fill="#8a5a3a"/>
<circle cx="995.9" cy="592.8" r="4" fill="none" stroke="#3f7f3f" stroke-width="1.3"/>
<path d="M995.9,588.3L1001.2,597.6L990.6,597.6Z" fill="#ff0000" stroke="#d00000" stroke-width="1"/>
<circle cx="995.9" cy="594.6" r="1.1" fill="#8a5a3a"/>
<circle cx="1091.0" cy="592.8" r="4" fill="none" stroke="#3f7f3f" stroke-width="1.3"/>
<path d="M1091.0,588.3L1096.3,597.6L1085.7,597.6Z" fill="#ff0000" stroke="#d00000" stroke-width="1"/>
<circle cx="1091.0" cy="594.6" r="1.1" fill="#8a5a3a"/>
<circle cx="1186.2" cy="592.8" r="4" fill="none" stroke="#3f7f3f" stroke-width="1.3"/>
<path d="M1186.2,588.3L1191.5,597.6L1180.9,597.6Z" fill="#ff0000" stroke="#d00000" stroke-width="1"/>
<circle cx="1186.2" cy="594.6" r="1.1" fill="#8a5a3a"/>
</svg>
<div class="abs" style="left:1406px;top:71px;width:468px;height:117px;border:1px solid #cfcfcf"></div>
<div class="abs" style="left:1410px;top:75px;width:15px;height:15px;border:1px solid #ddd;background:#fff"></div><div class="abs" style="left:1412px;top:77px;width:11px;height:11px;background:#0000ff"></div>
<svg class="abs" style="left:1477px;top:76px" width="52" height="16"><line x1="0" y1="7.5" x2="50" y2="7.5" stroke="#000090" stroke-width="1"/><path d="M25,3.0L30,12.3H20Z" fill="none" stroke="#3030dd" stroke-width="1.1"/></svg>
<div class="abs lg" style="left:1668px;top:77px;line-height:13px">Lufttemp</div>
<div class="abs" style="left:1410px;top:96px;width:15px;height:15px;border:1px solid #ddd;background:#fff"></div><div class="abs" style="left:1412px;top:98px;width:11px;height:11px;background:#ff0000"></div>
<svg class="abs" style="left:1477px;top:97px" width="52" height="16"><line x1="0" y1="7.5" x2="48" y2="7.5" stroke="#772228" stroke-width="1" stroke-dasharray="2,3"/><rect x="21.3" y="3.8" width="7.4" height="7.8" fill="none" stroke="#dd4848" stroke-width="1.2"/></svg>
<div class="abs lg" style="left:1668px;top:98px;line-height:13px">Daggpunkt</div>
<div class="abs" style="left:1410px;top:117px;width:15px;height:15px;border:1px solid #ddd;background:#fff"></div><div class="abs" style="left:1412px;top:119px;width:11px;height:11px;background:#000"></div>
<svg class="abs" style="left:1477px;top:118px" width="52" height="16"><line x1="0" y1="6.5" x2="48" y2="6.5" stroke="#000" stroke-width="1" stroke-dasharray="2,3"/><path d="M25,1.5L30,6.5L25,11.5L20,6.5Z" fill="none" stroke="#333" stroke-width="1.1"/></svg>
<div class="abs lg" style="left:1668px;top:119px;line-height:13px">Yttemp</div>
<div class="abs note" style="left:1407px;top:137px;line-height:13px">*Grå bakgrund i graf visar prognosvärden</div>
<div class="abs lnk" style="left:1407px;top:154px;line-height:13px">Dölj punktsymboler</div>
<div class="abs lnk" style="left:1407px;top:171px;line-height:13px">Visa historisk prognos</div>
<div class="abs" style="left:1406px;top:366px;width:468px;height:187px;border:1px solid #cfcfcf"></div>
<div class="abs" style="left:1410px;top:370px;width:15px;height:15px;border:1px solid #ddd;background:#fff"></div><div class="abs" style="left:1412px;top:372px;width:11px;height:11px;background:#0000ff"></div>
<div class="abs lg" style="left:1465px;top:372px;line-height:13px">Regn</div>
<div class="abs" style="left:1410px;top:391px;width:15px;height:15px;border:1px solid #ddd;background:#fff"></div><div class="abs" style="left:1412px;top:393px;width:11px;height:11px;background:#555555"></div>
<div class="abs lg" style="left:1465px;top:393px;line-height:13px">Underkylt</div>
<div class="abs" style="left:1410px;top:412px;width:15px;height:15px;border:1px solid #ddd;background:#fff"></div><div class="abs" style="left:1412px;top:414px;width:11px;height:11px;background:#ff0000"></div>
<div class="abs lg" style="left:1465px;top:414px;line-height:13px">Snö</div>
<div class="abs" style="left:1410px;top:432px;width:15px;height:15px;border:1px solid #ddd;background:#fff"></div><div class="abs" style="left:1412px;top:434px;width:11px;height:11px;background:#4caf50"></div>
<div class="abs lg" style="left:1465px;top:434px;line-height:13px">Snöblandat</div>
<div class="abs" style="left:1410px;top:453px;width:15px;height:15px;border:1px solid #ddd;background:#fff"></div><div class="abs" style="left:1412px;top:455px;width:11px;height:11px;background:#0000ff"></div>
<svg class="abs" style="left:1465px;top:454px" width="52" height="16"><line x1="0" y1="7.5" x2="48" y2="7.5" stroke="#000060" stroke-width="1" stroke-dasharray="1.5,3.5"/><path d="M25,2.5L30,7.5L25,12.5L20,7.5Z" fill="none" stroke="#3a3ad0" stroke-width="1.1"/></svg>
<div class="abs lg" style="left:1641px;top:455px;line-height:13px">Ack regn</div>
<div class="abs" style="left:1410px;top:474px;width:15px;height:15px;border:1px solid #ddd;background:#fff"></div><div class="abs" style="left:1412px;top:476px;width:11px;height:11px;background:#555555"></div>
<svg class="abs" style="left:1465px;top:475px" width="52" height="16"><line x1="0" y1="7.5" x2="50" y2="7.5" stroke="#444" stroke-width="1" stroke-dasharray="6.5,2.7"/><rect x="21.8" y="3.7" width="6.4" height="7.6" fill="none" stroke="#666" stroke-width="1.1"/></svg>
<div class="abs lg" style="left:1641px;top:476px;line-height:13px">Ack underkylt</div>
<div class="abs" style="left:1410px;top:495px;width:15px;height:15px;border:1px solid #ddd;background:#fff"></div><div class="abs" style="left:1412px;top:497px;width:11px;height:11px;background:#4caf50"></div>
<svg class="abs" style="left:1465px;top:496px" width="52" height="16"><line x1="0" y1="7.5" x2="46" y2="7.5" stroke="#5a9a5a" stroke-width="1" stroke-dasharray="5,5"/><circle cx="25" cy="7.5" r="4.2" fill="#fff" stroke="#66bb66" stroke-width="1.1"/><line x1="20" y1="7.5" x2="25" y2="7.5" stroke="#55aa55" stroke-width="1"/><line x1="29" y1="7.5" x2="34" y2="7.5" stroke="#55aa55" stroke-width="1"/></svg>
<div class="abs lg" style="left:1641px;top:497px;line-height:13px">Ack snöblandat</div>
<div class="abs" style="left:1410px;top:516px;width:15px;height:15px;border:1px solid #ddd;background:#fff"></div><div class="abs" style="left:1412px;top:518px;width:11px;height:11px;background:#ff0000"></div>
<svg class="abs" style="left:1465px;top:517px" width="52" height="16"><line x1="0" y1="6.5" x2="10" y2="6.5" stroke="#aa2222" stroke-width="1"/><line x1="40" y1="6.5" x2="50" y2="6.5" stroke="#aa2222" stroke-width="1"/><path d="M25,1.7L30.5,11.3H19.5Z" fill="none" stroke="#dd3333" stroke-width="1.1"/><line x1="20" y1="6.5" x2="30" y2="6.5" stroke="#aa2222" stroke-width="1"/></svg>
<div class="abs lg" style="left:1641px;top:518px;line-height:13px">Ack snö</div>
<div class="abs note" style="left:1407px;top:536px;line-height:13px">*Grå bakgrund i graf visar prognosvärden</div>
<div class="abs" style="left:0;top:661px;width:1668px;height:47px;background:#03458c"></div>
<svg class="abs" style="left:14px;top:672px" width="18" height="22" viewBox="0 0 18 22"><path d="M9,1.5C5.4,1.5 3,4.2 3,7.4C3,11.5 9,17 9,17C9,17 15,11.5 15,7.4C15,4.2 12.6,1.5 9,1.5Z" fill="none" stroke="#fff" stroke-width="1.6"/><circle cx="9" cy="7.3" r="1.8" fill="#fff"/><path d="M5.5,15.5C3.3,16.2 2.5,17.2 2.5,18.3C2.5,20 5.5,21 9,21C12.5,21 15.5,20 15.5,18.3C15.5,17.2 14.7,16.2 12.5,15.5" fill="none" stroke="#fff" stroke-width="1.6"/></svg>
<div class="abs" style="left:36px;top:676.6px;font-size:11px;font-weight:bold;color:#fff;line-height:13px;letter-spacing:-0.45px;white-space:nowrap">Visa på kartan</div>
<div class="abs" style="left:797px;top:674px;font-size:14px;font-weight:bold;color:#fff;line-height:16px;letter-spacing:0.14px;white-space:nowrap">TrackIce #430114</div>
<svg class="abs" style="left:1649px;top:673px" width="19" height="16" viewBox="0 0 19 16"><rect x="1" y="1" width="7" height="2.8" fill="#fff"/><rect x="1" y="6.6" width="13" height="2.8" fill="#fff"/><rect x="1" y="12.1" width="7" height="2.8" fill="#fff"/><path d="M11,2.5L16.5,8L11,13.5" fill="none" stroke="#fff" stroke-width="2.8"/></svg>
<div class="row gr" style="top:708px;height:10px"></div>
<div class="row" style="top:718px;height:28px"><div class="lab" style="top:7px;line-height:15px">Temperatur:</div><div class="val" style="top:7px;line-height:15px">3.93 <span class="unit">°C</span></div></div>
<div class="row gr" style="top:746px;height:29px"><div class="lab" style="top:8px;line-height:15px">Väg temp.:</div><div class="val" style="top:8px;line-height:15px">0.1 <span class="unit">°C</span></div></div>
<div class="row" style="top:775px;height:28px"><div class="lab" style="top:7px;line-height:15px">Luftfuktighet:</div><div class="val" style="top:7px;line-height:15px">92.99 <span class="unit">%</span></div></div>
<div class="row gr" style="top:803px;height:29px"><div class="lab" style="top:8px;line-height:15px">Daggpunkt:</div><div class="val" style="top:8px;line-height:15px">2.91 <span class="unit">°C</span></div></div>
<div class="row" style="top:832px;height:29px"><div class="lab" style="top:7px;line-height:15px">Status byte:</div><div class="val" style="top:7px;line-height:15px">7 <span class="ub">(Alla sensorer svarade OK.)</span></div></div>
<div class="row gr" style="top:861px;height:33px"><div class="lab" style="top:7px;line-height:15px">Batteri:</div><div class="val" style="top:1.5px;line-height:15px">6.95 <span class="ub">V (Basstation)</span><br>3.4 <span class="ub">V (Sensor A)</span></div></div>
<div class="abs" style="left:16px;top:931px;font-size:16px;font-weight:bold;color:#111;line-height:19px;white-space:nowrap">Historik</div>
<div class="abs" style="left:16px;top:966px;width:1640px;height:1px;background:#999"></div>
<div class="abs" style="left:1510px;top:931px;font-size:13px;color:#111;line-height:15px;white-space:nowrap">Tid:</div>
<div class="abs" style="left:1534px;top:931px;width:69px;height:16px;border:1px solid #555;border-radius:2px;background:#fff"></div>
<div class="abs" style="left:1538px;top:932px;font-size:12px;color:#111;line-height:14px;white-space:nowrap">24 tim.</div>
<svg class="abs" style="left:1588px;top:935px" width="10" height="8" viewBox="0 0 10 8"><path d="M1.5,2L5,5.5L8.5,2" fill="none" stroke="#111" stroke-width="1.6"/></svg>
<svg class="abs" style="left:1615px;top:930px" width="19" height="19" viewBox="0 0 19 19"><rect x="1.5" y="3" width="16" height="15" fill="#8a8a8a"/><rect x="4" y="1" width="2" height="4" fill="#8a8a8a"/><rect x="13" y="1" width="2" height="4" fill="#8a8a8a"/><g fill="#fff"><rect x="3.5" y="8" width="2.5" height="2"/><rect x="7.5" y="8" width="2.5" height="2"/><rect x="11.5" y="8" width="2.5" height="2"/><rect x="3.5" y="12" width="2.5" height="2"/><rect x="7.5" y="12" width="2.5" height="2"/><rect x="11.5" y="12" width="2.5" height="2"/></g></svg>
<svg class="abs" style="left:1638px;top:930px" width="19" height="19" viewBox="0 0 19 19"><path d="M3.2,6.5A7,7 0 1 1 2.5,10" fill="none" stroke="#8a8a8a" stroke-width="2"/><path d="M1,3.5L4.5,7.5L7,3.2Z" fill="#8a8a8a"/><path d="M9.5,5.5V10L12.5,12" fill="none" stroke="#8a8a8a" stroke-width="2"/></svg>
<div class="abs" style="left:1639px;top:952px;width:17px;height:3px;background:#e0702a"></div>
<div class="abs" style="left:16px;top:980px;width:1640px;height:29px;background:#e4e4e4"></div>
<svg class="abs" style="left:1400px;top:980px" width="256" height="29" viewBox="1400 980 256 29"><circle cx="1416.5" cy="992.5" r="4.8" fill="none" stroke="#777" stroke-width="2"/><rect x="1414" y="990" width="5" height="5" fill="#777"/><line x1="1420" y1="996" x2="1424" y2="1000" stroke="#777" stroke-width="2.4"/><path d="M1439.3,987V1001M1432.5,994H1446" stroke="#aaa" stroke-width="1.6"/><path d="M1439.3,986L1441.5,989H1437Z M1439.3,1002L1441.5,999H1437Z M1432,994L1435,991.8V996.2Z M1446.5,994L1443.5,991.8V996.2Z" fill="#aaa"/><rect x="1455" y="988" width="12" height="12" fill="#aaa"/><path d="M1461,990.5V997.5M1457.5,994H1464.5" stroke="#e4e4e4" stroke-width="2"/><rect x="1476" y="988" width="13" height="12" fill="#aaa"/><path d="M1478.5,994H1486.5" stroke="#e4e4e4" stroke-width="2"/><path d="M1497.5,991V987.5H1501 M1507,987.5H1510.5V991 M1510.5,997V1000.5H1507 M1501,1000.5H1497.5V997" fill="none" stroke="#aaa" stroke-width="1"/><path d="M1500,990L1508,998M1508,990L1500,998" stroke="#aaa" stroke-width="1.3"/><path d="M1519,994.5L1525.5,988L1532,994.5H1530V1000.5H1527V996.5H1524V1000.5H1521V994.5Z" fill="#aaa"/><path d="M1541,989.5H1547" stroke="#aaa" stroke-width="1.5" stroke-dasharray="1.5,2"/><circle cx="1549" cy="989.5" r="1.6" fill="#aaa"/><path d="M1549,992V1000" stroke="#aaa" stroke-width="1.5" stroke-dasharray="1.5,2"/><path d="M1562,994L1566,990.5H1576V997.5H1566Z" fill="#aaa"/><path d="M1586,988H1598V992H1586L1584,990Z" fill="#777"/><path d="M1586,995H1598V999H1586L1584,997Z" fill="#777"/><path d="M1612,991H1615.5L1617,988.5H1621L1622.5,991H1626V1000H1612Z" fill="#aaa"/><circle cx="1619" cy="995.3" r="2.6" fill="#e4e4e4"/><circle cx="1619" cy="995.3" r="1.5" fill="#aaa"/><path d="M1635.5,988.5H1644.5L1647,991V1000H1635.5Z" fill="none" stroke="#aaa" stroke-width="1.2"/><rect x="1638.5" y="988.5" width="5" height="3.5" fill="#aaa"/><rect x="1638" y="995" width="6.5" height="4.5" fill="none" stroke="#aaa" stroke-width="1"/></svg>
<div class="cb" style="left:28px;background:#c51fe0"></div>
<svg class="abs" style="left:28px;top:1017px" width="14" height="14" viewBox="0 0 14 14"><path d="M3,7.2L5.8,10.2L11.2,3.8" fill="none" stroke="#fff" stroke-width="1.5"/></svg>
<div class="cbl" style="left:44px;line-height:16px">Daggpunkt</div>
<div class="cb" style="left:123px;background:#e8b820"></div>
<svg class="abs" style="left:123px;top:1017px" width="14" height="14" viewBox="0 0 14 14"><path d="M3,7.2L5.8,10.2L11.2,3.8" fill="none" stroke="#fff" stroke-width="1.5"/></svg>
<div class="cbl" style="left:139px;line-height:16px">Temperatur</div>
<div class="cb" style="left:220px;background:#1eb020"></div>
<svg class="abs" style="left:220px;top:1017px" width="14" height="14" viewBox="0 0 14 14"><path d="M3,7.2L5.8,10.2L11.2,3.8" fill="none" stroke="#fff" stroke-width="1.5"/></svg>
<div class="cbl" style="left:236px;line-height:16px">Luftfuktighet</div>
<div class="cb" style="left:326px;background:#7a5c1e"></div>
<svg class="abs" style="left:326px;top:1017px" width="14" height="14" viewBox="0 0 14 14"><path d="M3,7.2L5.8,10.2L11.2,3.8" fill="none" stroke="#fff" stroke-width="1.5"/></svg>
<div class="cbl" style="left:342px;line-height:16px">Konduktivitet (A)</div>
<div class="cb" style="left:458px;background:#1f72c4"></div>
<svg class="abs" style="left:458px;top:1017px" width="14" height="14" viewBox="0 0 14 14"><path d="M3,7.2L5.8,10.2L11.2,3.8" fill="none" stroke="#fff" stroke-width="1.5"/></svg>
<div class="cbl" style="left:474px;line-height:16px">Väg temp. (A)</div>
<svg class="abs" style="left:0;top:0" width="1882" height="1525" viewBox="0 0 1882 1525">
<rect x="92.5" y="1083" width="1411.5" height="297" fill="#fffcf5"/>
<line x1="93" y1="1368.5" x2="1504" y2="1368.5" stroke="#f0ece2" stroke-width="1"/>
<line x1="93" y1="1329.5" x2="1504" y2="1329.5" stroke="#f0ece2" stroke-width="1"/>
<line x1="93" y1="1290.5" x2="1504" y2="1290.5" stroke="#f0ece2" stroke-width="1"/>
<line x1="93" y1="1213.5" x2="1504" y2="1213.5" stroke="#f0ece2" stroke-width="1"/>
<line x1="93" y1="1174.5" x2="1504" y2="1174.5" stroke="#f0ece2" stroke-width="1"/>
<line x1="93" y1="1135.5" x2="1504" y2="1135.5" stroke="#f0ece2" stroke-width="1"/>
<line x1="93" y1="1097.5" x2="1504" y2="1097.5" stroke="#f0ece2" stroke-width="1"/>
<line x1="154.5" y1="1083" x2="154.5" y2="1380" stroke="#f0ece2" stroke-width="1"/>
<line x1="316.5" y1="1083" x2="316.5" y2="1380" stroke="#f0ece2" stroke-width="1"/>
<line x1="479.5" y1="1083" x2="479.5" y2="1380" stroke="#f0ece2" stroke-width="1"/>
<line x1="642.5" y1="1083" x2="642.5" y2="1380" stroke="#f0ece2" stroke-width="1"/>
<line x1="805.5" y1="1083" x2="805.5" y2="1380" stroke="#f0ece2" stroke-width="1"/>
<line x1="968.5" y1="1083" x2="968.5" y2="1380" stroke="#f0ece2" stroke-width="1"/>
<line x1="1131.5" y1="1083" x2="1131.5" y2="1380" stroke="#f0ece2" stroke-width="1"/>
<line x1="1294.5" y1="1083" x2="1294.5" y2="1380" stroke="#f0ece2" stroke-width="1"/>
<line x1="1457.5" y1="1083" x2="1457.5" y2="1380" stroke="#f0ece2" stroke-width="1"/>
<line x1="93" y1="1252.5" x2="1504" y2="1252.5" stroke="#444" stroke-width="1"/>
<line x1="93" y1="1354.5" x2="1504" y2="1354.5" stroke="#444" stroke-width="1"/>
<path d="M92.5,1083.5H1504 M92.5,1083V1380.5 M92.5,1380.5H1504.5 M1504.5,1083V1381" fill="none" stroke="#444" stroke-width="1"/>
<polyline points="185.3,1303.2 198.9,1302.3 212.4,1300.0 226.0,1297.9 239.6,1297.1 253.2,1294.1 266.7,1289.0 280.3,1286.1 293.9,1283.6 307.4,1282.9 321.0,1283.6 334.6,1281.0 348.1,1279.5 361.7,1278.1 375.3,1275.3 388.9,1274.3 402.4,1273.7 416.0,1269.9 429.6,1265.8 443.1,1263.3 456.7,1262.9 470.3,1263.3 483.8,1261.4 497.4,1259.1 511.0,1258.0 524.5,1257.0 538.1,1256.1 551.7,1255.7 565.3,1253.8 578.8,1250.9 592.4,1249.0 606.0,1245.6 619.5,1244.6 633.1,1241.4 646.7,1240.1 660.2,1239.5 673.8,1237.0 687.4,1235.1 701.0,1233.8 714.5,1231.3 728.1,1232.5 741.7,1230.0 755.2,1225.2 768.8,1225.2 782.4,1225.2 796.0,1224.7 809.5,1224.7 823.1,1223.3 836.7,1221.1 850.2,1222.0 863.8,1227.1 877.4,1231.0 890.9,1233.8 904.5,1232.5 918.1,1236.7 931.7,1236.7 945.2,1236.7 958.8,1237.6 972.4,1237.2 985.9,1235.7 999.5,1233.8 1013.1,1231.0 1026.6,1226.8 1040.2,1221.8 1053.8,1215.7 1067.4,1212.9 1080.9,1205.7 1094.5,1202.0 1108.1,1197.7 1121.6,1192.9 1135.2,1191.0 1148.8,1183.0 1162.3,1181.5 1175.9,1182.8 1189.5,1173.9 1203.0,1171.0 1216.6,1167.6 1230.2,1169.1 1243.8,1163.8 1257.3,1163.4 1270.9,1160.0 1284.5,1159.6 1298.0,1157.2 1311.6,1157.2 1325.2,1152.6 1338.8,1149.2 1352.3,1146.3 1365.9,1149.2 1379.5,1145.9 1393.0,1144.4 1406.6,1141.3 1420.2,1139.0 1433.7,1142.6 1447.3,1138.9 1460.9,1139.5" fill="none" stroke="#c81de6" stroke-width="2" stroke-linejoin="round"/>
<polyline points="185.3,1260.4 198.9,1260.8 212.4,1259.5 226.0,1258.9 239.6,1259.5 253.2,1260.8 266.7,1264.8 280.3,1267.5 293.9,1266.7 307.4,1265.9 321.0,1265.6 334.6,1262.3 348.1,1260.1 361.7,1257.6 375.3,1255.1 388.9,1254.3 402.4,1253.8 416.0,1255.1 429.6,1254.3 443.1,1253.8 456.7,1252.8 470.3,1251.5 483.8,1248.4 497.4,1245.6 511.0,1245.2 524.5,1244.8 538.1,1244.6 551.7,1244.8 565.3,1243.9 578.8,1242.4 592.4,1241.0 606.0,1238.6 619.5,1238.2 633.1,1235.3 646.7,1233.8 660.2,1233.8 673.8,1231.9 687.4,1228.7 701.0,1227.1 714.5,1225.2 728.1,1225.6 741.7,1224.3 755.2,1222.0 768.8,1223.0 782.4,1223.9 796.0,1222.8 809.5,1222.8 823.1,1219.5 836.7,1214.8 850.2,1210.0 863.8,1206.6 877.4,1203.9 890.9,1202.8 904.5,1197.7 918.1,1193.3 931.7,1192.9 945.2,1192.9 958.8,1195.2 972.4,1197.3 985.9,1196.7 999.5,1195.4 1013.1,1193.9 1026.6,1191.4 1040.2,1190.4 1053.8,1186.8 1067.4,1184.4 1080.9,1178.7 1094.5,1177.3 1108.1,1172.9 1121.6,1169.7 1135.2,1167.8 1148.8,1161.5 1162.3,1155.8 1175.9,1154.5 1189.5,1145.4 1203.0,1141.0 1216.6,1136.8 1230.2,1137.2 1243.8,1131.5 1257.3,1129.8 1270.9,1125.8 1284.5,1124.8 1298.0,1121.0 1311.6,1120.6 1325.2,1115.9 1338.8,1111.7 1352.3,1109.6 1365.9,1114.0 1379.5,1114.0 1393.0,1111.1 1406.6,1107.1 1420.2,1103.9 1433.7,1106.1 1447.3,1101.9 1460.9,1099.9" fill="none" stroke="#e8b52a" stroke-width="2" stroke-linejoin="round"/>
<polyline points="185.3,1110.2 198.9,1109.2 212.4,1108.3 226.0,1107.7 239.6,1107.0 253.2,1104.5 266.7,1099.3 280.3,1096.9 293.9,1095.9 307.4,1095.9 321.0,1096.3 334.6,1096.9 348.1,1097.3 361.7,1097.6 375.3,1097.8 388.9,1097.8 402.4,1097.8 416.0,1095.0 429.6,1092.7 443.1,1092.5 456.7,1092.7 470.3,1093.1 483.8,1093.3 497.4,1093.3 511.0,1093.4 524.5,1093.1 538.1,1092.5 551.7,1091.7 565.3,1091.2 578.8,1090.8 592.4,1090.2 606.0,1089.6 619.5,1089.6 633.1,1089.8 646.7,1089.8 660.2,1089.8 673.8,1089.8 687.4,1089.8 701.0,1089.8 714.5,1089.8 728.1,1089.8 741.7,1089.3 755.2,1088.7 768.8,1087.9 782.4,1087.6 796.0,1087.6 809.5,1087.6 823.1,1088.3 836.7,1089.8 850.2,1093.1 863.8,1096.9 877.4,1099.3 890.9,1101.2 904.5,1103.1 918.1,1107.0 931.7,1107.3 945.2,1107.3 958.8,1107.0 972.4,1105.8 985.9,1105.0 999.5,1104.5 1013.1,1103.9 1026.6,1103.1 1040.2,1102.0 1053.8,1100.7 1067.4,1100.3 1080.9,1099.3 1094.5,1098.8 1108.1,1098.2 1121.6,1097.8 1135.2,1097.8 1148.8,1097.8 1162.3,1098.8 1175.9,1100.1 1189.5,1100.3 1203.0,1100.7 1216.6,1101.1 1230.2,1101.2 1243.8,1101.6 1257.3,1102.0 1270.9,1102.6 1284.5,1103.0 1298.0,1103.1 1311.6,1103.5 1325.2,1103.9 1338.8,1104.1 1352.3,1103.5 1365.9,1103.1 1379.5,1102.0 1393.0,1102.6 1406.6,1102.9 1420.2,1103.5 1433.7,1103.9 1447.3,1103.9 1460.9,1105.2" fill="none" stroke="#1ea820" stroke-width="2" stroke-linejoin="round"/>
<polyline points="185.3,1086.4 198.9,1086.4 212.4,1086.4 226.0,1086.4 239.6,1086.4 253.2,1086.4 266.7,1086.4 280.3,1086.4 293.9,1086.4 307.4,1086.4 321.0,1086.4 334.6,1086.4 348.1,1086.4 361.7,1086.4 375.3,1086.4 388.9,1086.4 402.4,1086.4 416.0,1086.4 429.6,1086.4 443.1,1086.4 456.7,1086.4 470.3,1086.4 483.8,1086.4 497.4,1086.4 511.0,1086.4 524.5,1086.4 538.1,1086.4 551.7,1086.4 565.3,1086.4 578.8,1086.4 592.4,1086.4 606.0,1086.4 619.5,1086.4 633.1,1086.4 646.7,1086.4 660.2,1086.4 673.8,1093.1 687.4,1094.0 701.0,1099.3 714.5,1104.5 728.1,1092.1 741.7,1104.5 755.2,1097.4 768.8,1111.1 782.4,1096.3 796.0,1091.7 809.5,1100.7 823.1,1120.6 836.7,1132.1 850.2,1113.0 863.8,1103.0 877.4,1107.7 890.9,1110.6 904.5,1111.1 918.1,1142.5 931.7,1135.9 945.2,1119.7 958.8,1116.8 972.4,1130.2 985.9,1133.0 999.5,1146.3 1013.1,1157.2 1026.6,1126.7 1040.2,1164.8 1053.8,1169.7 1067.4,1162.9 1080.9,1158.7 1094.5,1181.5 1108.1,1195.2 1121.6,1181.9 1135.2,1182.8 1148.8,1194.4 1162.3,1195.2 1175.9,1186.3 1189.5,1183.8 1203.0,1175.8 1216.6,1199.6 1230.2,1199.0 1243.8,1195.2 1257.3,1196.1 1270.9,1176.2 1284.5,1174.3 1298.0,1164.4 1311.6,1153.9 1325.2,1159.1 1338.8,1138.1 1352.3,1157.7 1365.9,1094.4 1379.5,1087.4 1393.0,1086.4 1406.6,1092.1 1420.2,1096.6 1433.7,1103.2 1447.3,1085.8 1460.9,1111.7" fill="none" stroke="#7a5c1e" stroke-width="2" stroke-linejoin="round"/>
<polyline points="185.3,1340.9 198.9,1340.9 212.4,1340.9 226.0,1337.1 239.6,1337.1 253.2,1337.1 266.7,1337.1 280.3,1337.1 293.9,1337.1 307.4,1337.1 321.0,1333.1 334.6,1333.1 348.1,1333.1 361.7,1333.1 375.3,1333.1 388.9,1333.1 402.4,1333.1 416.0,1329.3 429.6,1329.3 443.1,1329.3 456.7,1329.3 470.3,1329.3 483.8,1329.3 497.4,1325.7 511.0,1325.7 524.5,1325.7 538.1,1325.7 551.7,1325.7 565.3,1325.7 578.8,1321.9 592.4,1321.9 606.0,1321.9 619.5,1321.9 633.1,1321.9 646.7,1317.9 660.2,1317.9 673.8,1317.9 687.4,1314.1 701.0,1314.1 714.5,1314.1 728.1,1310.3 741.7,1310.3 755.2,1310.3 768.8,1306.5 782.4,1306.5 796.0,1306.5 809.5,1302.5 823.1,1302.5 836.7,1302.5 850.2,1298.7 863.8,1298.7 877.4,1294.7 890.9,1294.7 904.5,1290.9 918.1,1290.9 931.7,1287.1 945.2,1283.3 958.8,1279.5 972.4,1279.5 985.9,1279.5 999.5,1275.1 1013.1,1275.1 1026.6,1275.1 1040.2,1275.1 1053.8,1271.5 1067.4,1271.5 1080.9,1271.5 1094.5,1267.7 1108.1,1267.7 1121.6,1267.7 1135.2,1263.9 1148.8,1263.9 1162.3,1263.9 1175.9,1259.9 1189.5,1259.9 1203.0,1259.9 1216.6,1256.1 1230.2,1256.1 1243.8,1256.1 1257.3,1256.1 1270.9,1256.1 1284.5,1252.3 1298.0,1252.3 1311.6,1248.4 1325.2,1248.4 1338.8,1252.3 1352.3,1248.4 1365.9,1248.4 1379.5,1248.4 1393.0,1244.3 1406.6,1244.2 1420.2,1244.2 1433.7,1244.2 1447.3,1248.2 1460.9,1248.2" fill="none" stroke="#1f72c4" stroke-width="2" stroke-linejoin="round"/>
<line x1="88" y1="1368.5" x2="92" y2="1368.5" stroke="#444" stroke-width="1"/>
<text x="86.5" y="1372.0" text-anchor="end" class="pl">−3°C</text>
<line x1="88" y1="1329.5" x2="92" y2="1329.5" stroke="#444" stroke-width="1"/>
<text x="86.5" y="1333.3" text-anchor="end" class="pl">−2°C</text>
<line x1="88" y1="1290.5" x2="92" y2="1290.5" stroke="#444" stroke-width="1"/>
<text x="86.5" y="1294.6" text-anchor="end" class="pl">−1°C</text>
<line x1="88" y1="1252.5" x2="92" y2="1252.5" stroke="#444" stroke-width="1"/>
<text x="86.5" y="1255.9" text-anchor="end" class="pl">0°C</text>
<line x1="88" y1="1213.5" x2="92" y2="1213.5" stroke="#444" stroke-width="1"/>
<text x="86.5" y="1217.2" text-anchor="end" class="pl">1°C</text>
<line x1="88" y1="1174.5" x2="92" y2="1174.5" stroke="#444" stroke-width="1"/>
<text x="86.5" y="1178.5" text-anchor="end" class="pl">2°C</text>
<line x1="88" y1="1135.5" x2="92" y2="1135.5" stroke="#444" stroke-width="1"/>
<text x="86.5" y="1139.8" text-anchor="end" class="pl">3°C</text>
<line x1="88" y1="1097.5" x2="92" y2="1097.5" stroke="#444" stroke-width="1"/>
<text x="86.5" y="1101.1" text-anchor="end" class="pl">4°C</text>
<line x1="153.6" y1="1380" x2="153.6" y2="1385" stroke="#444" stroke-width="1"/>
<text x="153.6" y="1397.5" text-anchor="middle" class="pl">21:00</text>
<line x1="316.5" y1="1380" x2="316.5" y2="1385" stroke="#444" stroke-width="1"/>
<text x="316.5" y="1397.5" text-anchor="middle" class="pl">00:00</text>
<line x1="479.3" y1="1380" x2="479.3" y2="1385" stroke="#444" stroke-width="1"/>
<text x="479.3" y="1397.5" text-anchor="middle" class="pl">03:00</text>
<line x1="642.2" y1="1380" x2="642.2" y2="1385" stroke="#444" stroke-width="1"/>
<text x="642.2" y="1397.5" text-anchor="middle" class="pl">06:00</text>
<line x1="805.1" y1="1380" x2="805.1" y2="1385" stroke="#444" stroke-width="1"/>
<text x="805.1" y="1397.5" text-anchor="middle" class="pl">09:00</text>
<line x1="968.0" y1="1380" x2="968.0" y2="1385" stroke="#444" stroke-width="1"/>
<text x="968.0" y="1397.5" text-anchor="middle" class="pl">12:00</text>
<line x1="1130.8" y1="1380" x2="1130.8" y2="1385" stroke="#444" stroke-width="1"/>
<text x="1130.8" y="1397.5" text-anchor="middle" class="pl">15:00</text>
<line x1="1293.7" y1="1380" x2="1293.7" y2="1385" stroke="#444" stroke-width="1"/>
<text x="1293.7" y="1397.5" text-anchor="middle" class="pl">18:00</text>
<line x1="1456.6" y1="1380" x2="1456.6" y2="1385" stroke="#444" stroke-width="1"/>
<text x="1456.6" y="1397.5" text-anchor="middle" class="pl">21:00</text>
<text x="153.6" y="1411.5" text-anchor="middle" class="pl">Jan 11, 2022</text>
<text x="316.5" y="1411.5" text-anchor="middle" class="pl">Jan 12, 2022</text>
<line x1="1504.5" y1="1354.5" x2="1509" y2="1354.5" stroke="#444" stroke-width="1"/>
<text x="1512" y="1358.1" class="pl">0%</text>
<line x1="1504.5" y1="1287.5" x2="1509" y2="1287.5" stroke="#444" stroke-width="1"/>
<text x="1512" y="1291.1" class="pl">25%</text>
<line x1="1504.5" y1="1220.5" x2="1509" y2="1220.5" stroke="#444" stroke-width="1"/>
<text x="1512" y="1224.0" class="pl">50%</text>
<line x1="1504.5" y1="1153.5" x2="1509" y2="1153.5" stroke="#444" stroke-width="1"/>
<text x="1512" y="1157.0" class="pl">75%</text>
<line x1="1504.5" y1="1086.5" x2="1509" y2="1086.5" stroke="#444" stroke-width="1"/>
<text x="1512" y="1090.0" class="pl">100%</text>
<line x1="1596.5" y1="1083" x2="1596.5" y2="1380" stroke="#444" stroke-width="1"/>
<line x1="1596.5" y1="1354.5" x2="1601.5" y2="1354.5" stroke="#444" stroke-width="1"/>
<text x="1604.3" y="1358.1" class="pl">0 µS/cm</text>
<line x1="1596.5" y1="1309.5" x2="1601.5" y2="1309.5" stroke="#444" stroke-width="1"/>
<text x="1604.3" y="1313.5" class="pl">166 µS/cm</text>
<line x1="1596.5" y1="1265.5" x2="1601.5" y2="1265.5" stroke="#444" stroke-width="1"/>
<text x="1604.3" y="1269.0" class="pl">332 µS/cm</text>
<line x1="1596.5" y1="1220.5" x2="1601.5" y2="1220.5" stroke="#444" stroke-width="1"/>
<text x="1604.3" y="1224.5" class="pl">498 µS/cm</text>
<line x1="1596.5" y1="1176.5" x2="1601.5" y2="1176.5" stroke="#444" stroke-width="1"/>
<text x="1604.3" y="1179.9" class="pl">664 µS/cm</text>
<line x1="1596.5" y1="1131.5" x2="1601.5" y2="1131.5" stroke="#444" stroke-width="1"/>
<text x="1604.3" y="1135.3" class="pl">830 µS/cm</text>
<line x1="1596.5" y1="1087.5" x2="1601.5" y2="1087.5" stroke="#444" stroke-width="1"/>
<text x="1604.3" y="1090.8" class="pl">996 µS/cm</text>
<clipPath id="rsclip"><rect x="93" y="1427" width="1411" height="19"/></clipPath>
<rect x="93" y="1427" width="1411" height="19" fill="#fffcf5"/>
<g clip-path="url(#rsclip)"><polyline points="185.3,1456.51 198.9,1456.38 212.4,1456.08 226.0,1455.80 239.6,1455.69 253.2,1455.29 266.7,1454.60 280.3,1454.22 293.9,1453.89 307.4,1453.78 321.0,1453.89 334.6,1453.53 348.1,1453.32 361.7,1453.15 375.3,1452.76 388.9,1452.64 402.4,1452.56 416.0,1452.05 429.6,1451.49 443.1,1451.16 456.7,1451.11 470.3,1451.16 483.8,1450.90 497.4,1450.60 511.0,1450.44 524.5,1450.32 538.1,1450.19 551.7,1450.14 565.3,1449.88 578.8,1449.50 592.4,1449.25 606.0,1448.79 619.5,1448.66 633.1,1448.23 646.7,1448.05 660.2,1447.97 673.8,1447.64 687.4,1447.39 701.0,1447.21 714.5,1446.88 728.1,1447.03 741.7,1446.70 755.2,1446.06 768.8,1446.06 782.4,1446.06 796.0,1445.98 809.5,1445.98 823.1,1445.81 836.7,1445.50 850.2,1445.63 863.8,1446.32 877.4,1446.83 890.9,1447.21 904.5,1447.03 918.1,1447.59 931.7,1447.59 945.2,1447.59 958.8,1447.72 972.4,1447.67 985.9,1447.46 999.5,1447.21 1013.1,1446.83 1026.6,1446.27 1040.2,1445.60 1053.8,1444.79 1067.4,1444.40 1080.9,1443.44 1094.5,1442.95 1108.1,1442.37 1121.6,1441.73 1135.2,1441.47 1148.8,1440.40 1162.3,1440.20 1175.9,1440.38 1189.5,1439.18 1203.0,1438.80 1216.6,1438.34 1230.2,1438.54 1243.8,1437.83 1257.3,1437.78 1270.9,1437.32 1284.5,1437.27 1298.0,1436.94 1311.6,1436.94 1325.2,1436.33 1338.8,1435.87 1352.3,1435.48 1365.9,1435.87 1379.5,1435.43 1393.0,1435.23 1406.6,1434.81 1420.2,1434.50 1433.7,1434.99 1447.3,1434.49 1460.9,1434.57" fill="none" stroke="#c81de6" stroke-width="1.9"/><polyline points="185.3,1450.78 198.9,1450.83 212.4,1450.65 226.0,1450.57 239.6,1450.65 253.2,1450.83 266.7,1451.36 280.3,1451.72 293.9,1451.62 307.4,1451.51 321.0,1451.46 334.6,1451.03 348.1,1450.72 361.7,1450.39 375.3,1450.06 388.9,1449.96 402.4,1449.88 416.0,1450.06 429.6,1449.96 443.1,1449.88 456.7,1449.76 470.3,1449.58 483.8,1449.17 497.4,1448.79 511.0,1448.74 524.5,1448.69 538.1,1448.66 551.7,1448.69 565.3,1448.56 578.8,1448.35 592.4,1448.18 606.0,1447.85 619.5,1447.79 633.1,1447.41 646.7,1447.21 660.2,1447.21 673.8,1446.95 687.4,1446.52 701.0,1446.32 714.5,1446.06 728.1,1446.11 741.7,1445.93 755.2,1445.63 768.8,1445.76 782.4,1445.88 796.0,1445.73 809.5,1445.73 823.1,1445.30 836.7,1444.66 850.2,1444.02 863.8,1443.56 877.4,1443.21 890.9,1443.05 904.5,1442.37 918.1,1441.78 931.7,1441.73 945.2,1441.73 958.8,1442.03 972.4,1442.31 985.9,1442.24 999.5,1442.06 1013.1,1441.86 1026.6,1441.52 1040.2,1441.40 1053.8,1440.91 1067.4,1440.58 1080.9,1439.82 1094.5,1439.64 1108.1,1439.05 1121.6,1438.62 1135.2,1438.36 1148.8,1437.52 1162.3,1436.76 1175.9,1436.58 1189.5,1435.36 1203.0,1434.77 1216.6,1434.21 1230.2,1434.26 1243.8,1433.50 1257.3,1433.27 1270.9,1432.73 1284.5,1432.61 1298.0,1432.10 1311.6,1432.04 1325.2,1431.41 1338.8,1430.85 1352.3,1430.57 1365.9,1431.15 1379.5,1431.15 1393.0,1430.77 1406.6,1430.23 1420.2,1429.80 1433.7,1430.10 1447.3,1429.53 1460.9,1429.26" fill="none" stroke="#e8b52a" stroke-width="1.9"/><polyline points="185.3,1430.64 198.9,1430.52 212.4,1430.39 226.0,1430.31 239.6,1430.21 253.2,1429.88 266.7,1429.19 280.3,1428.86 293.9,1428.73 307.4,1428.73 321.0,1428.78 334.6,1428.86 348.1,1428.91 361.7,1428.96 375.3,1428.99 388.9,1428.99 402.4,1428.99 416.0,1428.60 429.6,1428.30 443.1,1428.27 456.7,1428.30 470.3,1428.35 483.8,1428.37 497.4,1428.37 511.0,1428.40 524.5,1428.35 538.1,1428.27 551.7,1428.17 565.3,1428.09 578.8,1428.04 592.4,1427.97 606.0,1427.89 619.5,1427.89 633.1,1427.92 646.7,1427.92 660.2,1427.92 673.8,1427.92 687.4,1427.92 701.0,1427.92 714.5,1427.92 728.1,1427.92 741.7,1427.84 755.2,1427.76 768.8,1427.66 782.4,1427.61 796.0,1427.61 809.5,1427.61 823.1,1427.71 836.7,1427.92 850.2,1428.35 863.8,1428.86 877.4,1429.19 890.9,1429.44 904.5,1429.70 918.1,1430.21 931.7,1430.26 945.2,1430.26 958.8,1430.21 972.4,1430.06 985.9,1429.95 999.5,1429.88 1013.1,1429.80 1026.6,1429.70 1040.2,1429.55 1053.8,1429.37 1067.4,1429.32 1080.9,1429.19 1094.5,1429.11 1108.1,1429.04 1121.6,1428.99 1135.2,1428.99 1148.8,1428.99 1162.3,1429.11 1175.9,1429.29 1189.5,1429.32 1203.0,1429.37 1216.6,1429.42 1230.2,1429.44 1243.8,1429.50 1257.3,1429.55 1270.9,1429.62 1284.5,1429.67 1298.0,1429.70 1311.6,1429.75 1325.2,1429.80 1338.8,1429.83 1352.3,1429.75 1365.9,1429.70 1379.5,1429.55 1393.0,1429.62 1406.6,1429.67 1420.2,1429.75 1433.7,1429.80 1447.3,1429.80 1460.9,1429.97" fill="none" stroke="#1ea820" stroke-width="1.9"/><polyline points="185.3,1427.46 198.9,1427.46 212.4,1427.46 226.0,1427.46 239.6,1427.46 253.2,1427.46 266.7,1427.46 280.3,1427.46 293.9,1427.46 307.4,1427.46 321.0,1427.46 334.6,1427.46 348.1,1427.46 361.7,1427.46 375.3,1427.46 388.9,1427.46 402.4,1427.46 416.0,1427.46 429.6,1427.46 443.1,1427.46 456.7,1427.46 470.3,1427.46 483.8,1427.46 497.4,1427.46 511.0,1427.46 524.5,1427.46 538.1,1427.46 551.7,1427.46 565.3,1427.46 578.8,1427.46 592.4,1427.46 606.0,1427.46 619.5,1427.46 633.1,1427.46 646.7,1427.46 660.2,1427.46 673.8,1428.35 687.4,1428.48 701.0,1429.19 714.5,1429.88 728.1,1428.22 741.7,1429.88 755.2,1428.94 768.8,1430.77 782.4,1428.78 796.0,1428.17 809.5,1429.37 823.1,1432.04 836.7,1433.57 850.2,1431.02 863.8,1429.67 877.4,1430.31 890.9,1430.69 904.5,1430.77 918.1,1434.98 931.7,1434.08 945.2,1431.92 958.8,1431.53 972.4,1433.32 985.9,1433.70 999.5,1435.48 1013.1,1436.94 1026.6,1432.86 1040.2,1437.96 1053.8,1438.62 1067.4,1437.70 1080.9,1437.14 1094.5,1440.20 1108.1,1442.03 1121.6,1440.25 1135.2,1440.38 1148.8,1441.93 1162.3,1442.03 1175.9,1440.84 1189.5,1440.51 1203.0,1439.44 1216.6,1442.62 1230.2,1442.54 1243.8,1442.03 1257.3,1442.16 1270.9,1439.49 1284.5,1439.23 1298.0,1437.91 1311.6,1436.50 1325.2,1437.19 1338.8,1434.39 1352.3,1437.01 1365.9,1428.53 1379.5,1427.58 1393.0,1427.46 1406.6,1428.22 1420.2,1428.82 1433.7,1429.71 1447.3,1427.38 1460.9,1430.85" fill="none" stroke="#7a5c1e" stroke-width="1.9"/><polyline points="185.3,1461.56 198.9,1461.56 212.4,1461.56 226.0,1461.05 239.6,1461.05 253.2,1461.05 266.7,1461.05 280.3,1461.05 293.9,1461.05 307.4,1461.05 321.0,1460.51 334.6,1460.51 348.1,1460.51 361.7,1460.51 375.3,1460.51 388.9,1460.51 402.4,1460.51 416.0,1460.00 429.6,1460.00 443.1,1460.00 456.7,1460.00 470.3,1460.00 483.8,1460.00 497.4,1459.52 511.0,1459.52 524.5,1459.52 538.1,1459.52 551.7,1459.52 565.3,1459.52 578.8,1459.01 592.4,1459.01 606.0,1459.01 619.5,1459.01 633.1,1459.01 646.7,1458.47 660.2,1458.47 673.8,1458.47 687.4,1457.96 701.0,1457.96 714.5,1457.96 728.1,1457.45 741.7,1457.45 755.2,1457.45 768.8,1456.94 782.4,1456.94 796.0,1456.94 809.5,1456.41 823.1,1456.41 836.7,1456.41 850.2,1455.90 863.8,1455.90 877.4,1455.36 890.9,1455.36 904.5,1454.85 918.1,1454.85 931.7,1454.34 945.2,1453.83 958.8,1453.32 972.4,1453.32 985.9,1453.32 999.5,1452.74 1013.1,1452.74 1026.6,1452.74 1040.2,1452.74 1053.8,1452.25 1067.4,1452.25 1080.9,1452.25 1094.5,1451.74 1108.1,1451.74 1121.6,1451.74 1135.2,1451.23 1148.8,1451.23 1162.3,1451.23 1175.9,1450.70 1189.5,1450.70 1203.0,1450.70 1216.6,1450.19 1230.2,1450.19 1243.8,1450.19 1257.3,1450.19 1270.9,1450.19 1284.5,1449.68 1298.0,1449.68 1311.6,1449.17 1325.2,1449.17 1338.8,1449.68 1352.3,1449.17 1365.9,1449.17 1379.5,1449.17 1393.0,1448.61 1406.6,1448.60 1420.2,1448.60 1433.7,1448.60 1447.3,1449.14 1460.9,1449.14" fill="none" stroke="#1f72c4" stroke-width="1.9"/></g>
<path d="M93.5,1446V1427.5H1503.5V1446" fill="none" stroke="#999" stroke-width="1"/>
<rect x="91.5" y="1437.5" width="3" height="14" rx="1" fill="#fff" stroke="#444" stroke-width="1"/>
<rect x="1502.5" y="1437.5" width="3" height="14" rx="1" fill="#fff" stroke="#444" stroke-width="1"/>
<rect x="80" y="1446" width="1440" height="20" fill="#fff"/>
</svg>
</body></html>
